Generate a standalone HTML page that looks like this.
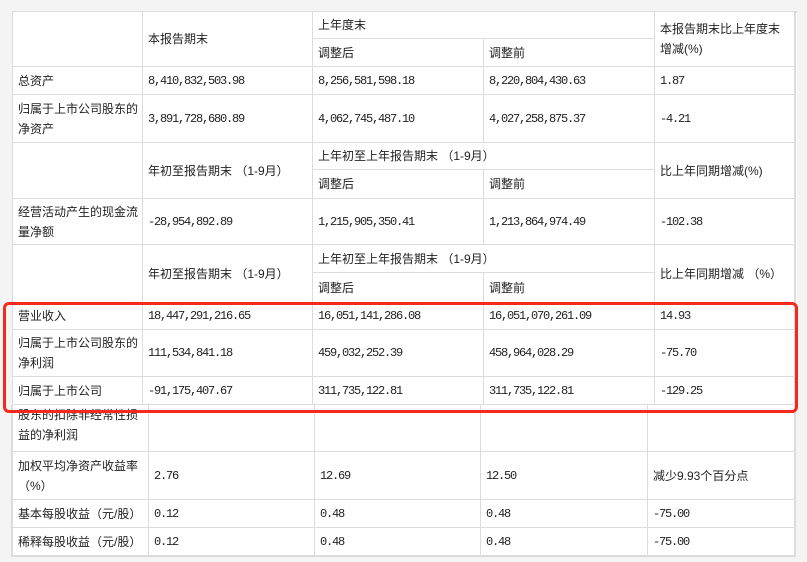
<!DOCTYPE html>
<html><head><meta charset="utf-8"><style>
body{margin:0;background:#f4f4f4;width:807px;height:562px;overflow:hidden;position:relative;font-family:"Liberation Sans","Noto Sans CJK SC",sans-serif;font-size:12px;color:#222}
.c{position:absolute;box-sizing:border-box;background:#fff;border-right:2px solid #dcdcdc;border-bottom:2px solid #dcdcdc;display:flex;align-items:center;padding-left:5px;line-height:20px;overflow:hidden}
.n{font-family:"Liberation Mono","Noto Sans CJK SC",monospace;font-size:12px;letter-spacing:-1.2px}
#t1{position:absolute;left:12px;top:11px;width:785px;height:394px;border-left:2px solid #dcdcdc;border-top:2px solid #dcdcdc;box-sizing:border-box;background:#fff}
.red{position:absolute;left:3px;top:302px;width:795px;height:111px;box-sizing:border-box;border:3px solid #f52a1e;border-radius:6px;z-index:5}
</style></head><body>
<div id="t1"></div>
<div class="red"></div>
<div id="cells"></div>
<script>
var T=[
[13,12,143,67,""],[143,12,313,67,"本报告期末"],[313,12,655,39,"上年度末"],[313,39,484,67,"调整后"],[484,39,655,67,"调整前"],[655,12,795,67,"本报告期末比上年度末<br>增减(%)"],
[13,67,143,95,"总资产"],[143,67,313,95,"8,410,832,503.98",1],[313,67,484,95,"8,256,581,598.18",1],[484,67,655,95,"8,220,804,430.63",1],[655,67,795,95,"1.87",1],
[13,95,143,143,"归属于上市公司股东的<br>净资产"],[143,95,313,143,"3,891,728,680.89",1],[313,95,484,143,"4,062,745,487.10",1],[484,95,655,143,"4,027,258,875.37",1],[655,95,795,143,"-4.21",1],
[13,143,143,199,""],[143,143,313,199,"年初至报告期末 （1-9月）"],[313,143,655,170,"上年初至上年报告期末 （1-9月）"],[313,170,484,199,"调整后"],[484,170,655,199,"调整前"],[655,143,795,199,"比上年同期增减(%)"],
[13,199,143,245,"经营活动产生的现金流<br>量净额"],[143,199,313,245,"-28,954,892.89",1],[313,199,484,245,"1,215,905,350.41",1],[484,199,655,245,"1,213,864,974.49",1],[655,199,795,245,"-102.38",1],
[13,245,143,303,""],[143,245,313,303,"年初至报告期末 （1-9月）"],[313,245,655,273,"上年初至上年报告期末 （1-9月）"],[313,273,484,303,"调整后"],[484,273,655,303,"调整前"],[655,245,795,303,"比上年同期增减 （%）"],
[13,303,143,330,"营业收入"],[143,303,313,330,"18,447,291,216.65",1],[313,303,484,330,"16,051,141,286.08",1],[484,303,655,330,"16,051,070,261.09",1],[655,303,795,330,"14.93",1],
[13,330,143,377,"归属于上市公司股东的<br>净利润"],[143,330,313,377,"111,534,841.18",1],[313,330,484,377,"459,032,252.39",1],[484,330,655,377,"458,964,028.29",1],[655,330,795,377,"-75.70",1],
[13,377,143,405,"归属于上市公司"],[143,377,313,405,"-91,175,407.67",1],[313,377,484,405,"311,735,122.81",1],[484,377,655,405,"311,735,122.81",1],[655,377,795,405,"-129.25",1],
[13,405,149,452,"<div style='margin-top:-6px'>股东的扣除非经常性损<br>益的净利润</div>"],[149,405,315,452,""],[315,405,481,452,""],[481,405,648,452,""],[648,405,795,452,""],
[13,452,149,500,"加权平均净资产收益率<br>（%）"],[149,452,315,500,"2.76",1],[315,452,481,500,"12.69",1],[481,452,648,500,"12.50",1],[648,452,795,500,"减少9.93个百分点"],
[13,500,149,528,"基本每股收益（元/股）"],[149,500,315,528,"0.12",1],[315,500,481,528,"0.48",1],[481,500,648,528,"0.48",1],[648,500,795,528,"-75.00",1],
[13,528,149,556,"稀释每股收益（元/股）"],[149,528,315,556,"0.12",1],[315,528,481,556,"0.48",1],[481,528,648,556,"0.48",1],[648,528,795,556,"-75.00",1]
];
var h="";
T.forEach(function(r){
 var x1=r[0],y1=r[1],w=r[2]-r[0]+1,hh=r[3]-r[1]+1;
 var bl=(r[1]>=405&&r[0]==13);
 var x=bl?11:x1; if(bl) w+=2;
 h+='<div class="c'+(r[5]?' n':'')+'" style="'+(bl?'border-left:2px solid #dcdcdc;':'')+'left:'+x+'px;top:'+y1+'px;width:'+w+'px;height:'+hh+'px"><div>'+r[4]+'</div></div>';
});
document.getElementById("cells").innerHTML=h;
</script>
</body></html>
